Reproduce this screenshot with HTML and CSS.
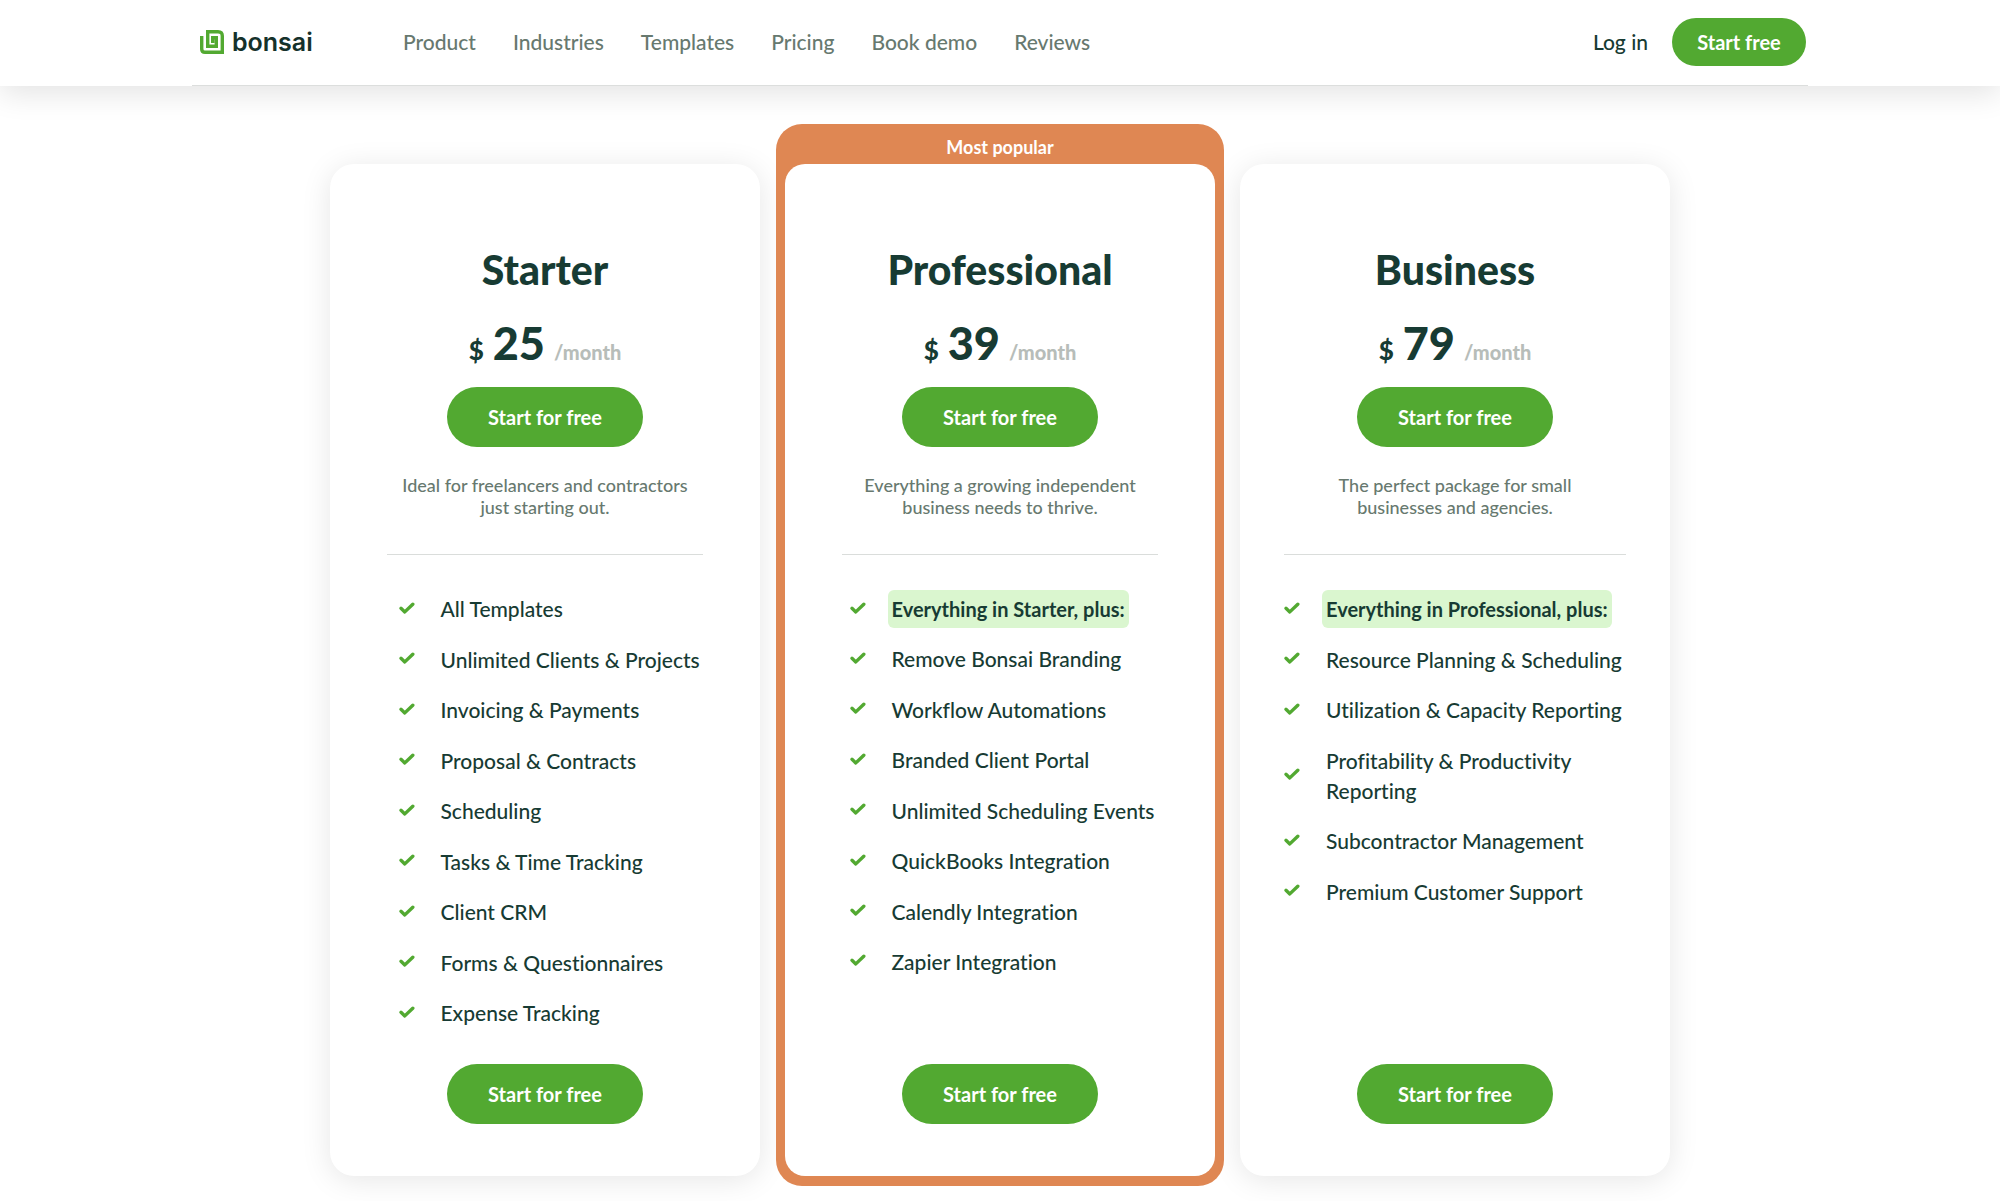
FILE: index.html
```html
<!DOCTYPE html>
<html lang="en">
<head>
    <meta charset="UTF-8">
    <meta name="viewport" content="width=device-width, initial-scale=1.0">
    <title>Bonsai - Pricing</title>

    <link rel="stylesheet" href="styles.css">

</head>
<body>

    <!-- check mark, reused by every feature -->
    <svg class="sprite" aria-hidden="true">
      <symbol id="check" viewBox="0 0 16 12">
        <path d="M2 6.3 L5.8 9.9 L13.8 2.2" fill="none" stroke="currentColor" stroke-width="3.4" stroke-linecap="round" stroke-linejoin="round"/>
      </symbol>
    </svg>

    <header class="header">
      <div class="header-inner">
        <a class="logo" href="#">
          <svg width="24" height="24" viewBox="0 0 24 24" fill="none" stroke="#52a931" stroke-width="3.4" aria-hidden="true">
            <path d="M0 7.7 H1.7 V19 Q1.7 22.3 5 22.3 H22.3 V6 Q22.3 1.7 18 1.7 H7.7 V16.3 H16.3 V7.7 H12.7 V13"/>
          </svg>
          <span>bonsai</span>
        </a>
        <nav class="nav">
          <a href="#">Product</a>
          <a href="#">Industries</a>
          <a href="#">Templates</a>
          <a href="#">Pricing</a>
          <a href="#">Book demo</a>
          <a href="#">Reviews</a>
        </nav>
        <div class="account">
          <a class="login" href="#">Log in</a>
          <button class="btn btn-small" type="button">Start free</button>
        </div>
      </div>
    </header>

    <main class="plans">
      <section class="plan">
        <div class="card">
          <h2>Starter</h2>
          <p class="price"><span class="currency">$</span><span class="amount">25</span><span class="period">/month</span></p>
          <button class="btn" type="button">Start for free</button>
          <p class="desc">Ideal for freelancers and contractors just starting out.</p>
          <hr>
          <ul class="features starter">
            <li><svg class="check"><use href="#check"/></svg><span>All Templates</span></li>
            <li><svg class="check"><use href="#check"/></svg><span>Unlimited Clients &amp; Projects</span></li>
            <li><svg class="check"><use href="#check"/></svg><span>Invoicing &amp; Payments</span></li>
            <li><svg class="check"><use href="#check"/></svg><span>Proposal &amp; Contracts</span></li>
            <li><svg class="check"><use href="#check"/></svg><span>Scheduling</span></li>
            <li><svg class="check"><use href="#check"/></svg><span>Tasks &amp; Time Tracking</span></li>
            <li><svg class="check"><use href="#check"/></svg><span>Client CRM</span></li>
            <li><svg class="check"><use href="#check"/></svg><span>Forms &amp; Questionnaires</span></li>
            <li><svg class="check"><use href="#check"/></svg><span>Expense Tracking</span></li>
          </ul>
          <button class="btn btn-bottom" type="button">Start for free</button>
        </div>
      </section>

      <section class="plan popular">
        <p class="ribbon">Most popular</p>
        <div class="card">
          <h2>Professional</h2>
          <p class="price"><span class="currency">$</span><span class="amount">39</span><span class="period">/month</span></p>
          <button class="btn" type="button">Start for free</button>
          <p class="desc">Everything a growing independent business needs to thrive.</p>
          <hr>
          <ul class="features professional">
            <li><svg class="check"><use href="#check"/></svg><strong>Everything in Starter, plus:</strong></li>
            <li><svg class="check"><use href="#check"/></svg><span>Remove Bonsai Branding</span></li>
            <li><svg class="check"><use href="#check"/></svg><span>Workflow Automations</span></li>
            <li><svg class="check"><use href="#check"/></svg><span>Branded Client Portal</span></li>
            <li><svg class="check"><use href="#check"/></svg><span>Unlimited Scheduling Events</span></li>
            <li><svg class="check"><use href="#check"/></svg><span>QuickBooks Integration</span></li>
            <li><svg class="check"><use href="#check"/></svg><span>Calendly Integration</span></li>
            <li><svg class="check"><use href="#check"/></svg><span>Zapier Integration</span></li>
          </ul>
          <button class="btn btn-bottom" type="button">Start for free</button>
        </div>
      </section>

      <section class="plan">
        <div class="card card-wide">
          <h2>Business</h2>
          <p class="price"><span class="currency">$</span><span class="amount">79</span><span class="period">/month</span></p>
          <button class="btn" type="button">Start for free</button>
          <p class="desc">The perfect package for small businesses and agencies.</p>
          <hr>
          <ul class="features business">
            <li><svg class="check"><use href="#check"/></svg><strong>Everything in Professional, plus:</strong></li>
            <li><svg class="check"><use href="#check"/></svg><span>Resource Planning &amp; Scheduling</span></li>
            <li><svg class="check"><use href="#check"/></svg><span>Utilization &amp; Capacity Reporting</span></li>
            <li><svg class="check"><use href="#check"/></svg><span>Profitability &amp; Productivity Reporting</span></li>
            <li><svg class="check"><use href="#check"/></svg><span>Subcontractor Management</span></li>
            <li><svg class="check"><use href="#check"/></svg><span>Premium Customer Support</span></li>
          </ul>
          <button class="btn btn-bottom" type="button">Start for free</button>
        </div>
      </section>
    </main>

</body>
</html>
```
FILE: styles.css
```css
* {
box-sizing: border-box;
}

body {
margin: 0;
background: #fff;
color: #173b33;
font-family: Lato, "Liberation Sans", sans-serif;
font-size: 20px;
font-weight: 500;
font-variant-ligatures: none;
line-height: 30px;
}

h2, p, ul {
margin: 0;
padding: 0;
}

a {
color: inherit;
text-decoration: none;
}

.sprite {
position: absolute;
width: 0;
height: 0;
}

/* header */

.header {
background: #fff;
box-shadow: 0 8px 30px rgba(0, 0, 0, 0.11);
}

.header-inner {
display: flex;
align-items: center;
max-width: 1616px;
height: 86px;
margin: 0 auto;
padding: 0 2px 1px 8px;
border-bottom: 1px solid #dcdedd;
}

.logo {
display: flex;
align-items: center;
gap: 8px;
width: 203px;
color: #15312b;
font-family: Inter, sans-serif;
font-size: 25px;
font-weight: 600;
}

.nav {
display: flex;
gap: 37px;
color: #67796f;
font-size: 21px;
}

.account {
display: flex;
align-items: center;
gap: 24px;
margin-left: auto;
}

.login {
font-size: 21px;
}

/* buttons */

.btn {
width: 196px;
height: 60px;
border: 0;
border-radius: 30px;
background: #52a931;
color: #fff;
font-family: inherit;
font-size: 20px;
font-weight: 700;
cursor: pointer;
}

.btn-small {
width: 134px;
height: 48px;
}

.btn-bottom {
margin-top: auto;
}

/* plans */

.plans {
display: grid;
grid-template-columns: repeat(3, 1fr);
gap: 25px;
max-width: 1340px;
margin: 78px auto 25px;
}

.plan {
position: relative;
display: flex;
}

.card {
position: relative;
display: flex;
flex-direction: column;
align-items: center;
flex: 1;
padding: 80px 57px 52px;
border-radius: 24px;
background: #fff;
box-shadow: 0 4px 30px rgba(0, 0, 0, 0.1);
}

.card-wide {
padding-left: 44px;
padding-right: 44px;
}

/* orange frame sits behind and around the card */
.popular::before {
content: "";
position: absolute;
top: -40px;
right: -9px;
bottom: -10px;
left: -9px;
border-radius: 26px;
background: #df8753;
}

.popular .card {
box-shadow: none;
border-radius: 20px;
}

.ribbon {
position: absolute;
top: -32px;
left: 0;
right: 0;
color: #fff;
font-size: 18px;
font-weight: 700;
text-align: center;
}

h2 {
font-size: 41px;
font-weight: 900;
line-height: 52px;
}

.price {
display: flex;
align-items: baseline;
justify-content: center;
margin: 19px 0 7px;
font-weight: 900;
line-height: 56px;
}

.currency {
font-size: 26px;
}

.amount {
margin: 0 9px;
font-size: 45px;
}

.period {
color: #b7bdb9;
font-size: 20px;
}

.desc {
max-width: 300px;
margin: 27px 0 36px;
color: #67796f;
font-size: 18px;
line-height: 22px;
text-align: center;
}

hr {
width: 100%;
margin: 0 0 39px;
border: 0;
border-top: 1px solid #dadddb;
}

/* feature lists */

.features {
display: grid;
align-content: space-between;
list-style: none;
font-size: 21px;
}

.starter {
width: 293px;
min-height: 434px;
margin-bottom: 36px;
white-space: nowrap;
}

.professional {
width: 301px;
min-height: 383px;
white-space: nowrap;
}

.business {
width: 100%;
min-height: 313px;
}

.features li {
display: flex;
align-items: center;
gap: 26px;
}

.features strong {
margin: -4px;
padding: 4px;
border-radius: 6px;
background: #daf6cf;
font-size: 20px;
font-weight: 700;
}

.check {
flex: none;
width: 16px;
height: 12px;
margin-bottom: 3px;
color: #52a931;
}
```
